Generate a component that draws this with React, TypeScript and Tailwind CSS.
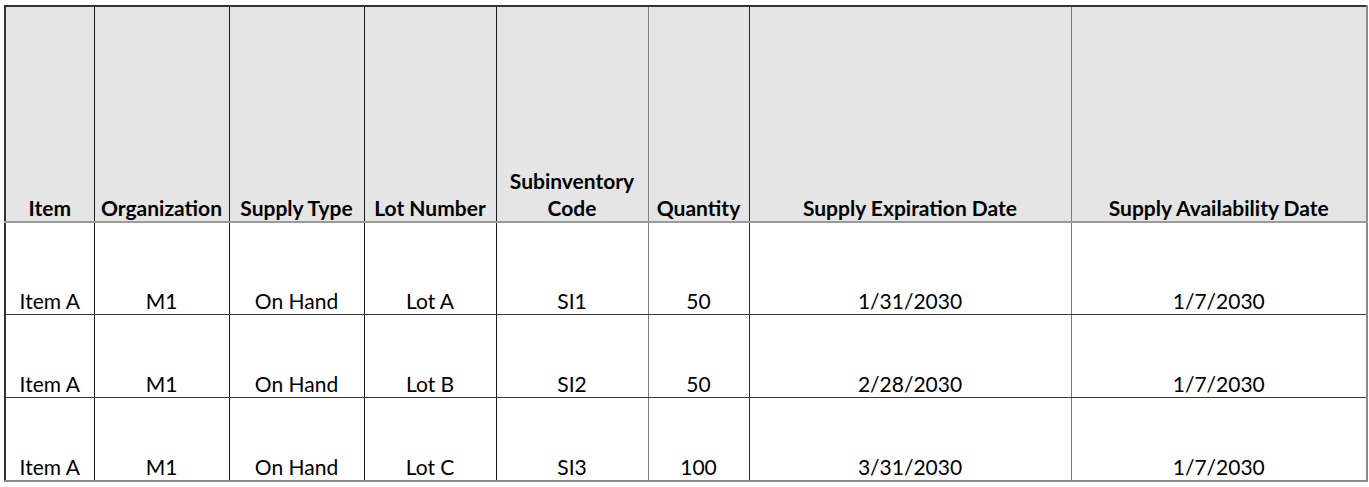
import React from "react";

const cols = [
  { label: ["Item"], w: "w-[89px]" },
  { label: ["Organization"], w: "w-[135px]" },
  { label: ["Supply Type"], w: "w-[135px]" },
  { label: ["Lot Number"], w: "w-[132px]" },
  { label: ["Subinventory", "Code"], w: "w-[152px]" },
  { label: ["Quantity"], w: "w-[101px]" },
  { label: ["Supply Expiration Date"], w: "w-[322px]" },
  { label: ["Supply Availability Date"], w: "w-[296px]" },
];

const rows = [
  { h: "h-[92px]", cells: ["Item A", "M1", "On Hand", "Lot A", "SI1", "50", "1/31/2030", "1/7/2030"] },
  { h: "h-[83px]", cells: ["Item A", "M1", "On Hand", "Lot B", "SI2", "50", "2/28/2030", "1/7/2030"] },
  { h: "h-[84px]", cells: ["Item A", "M1", "On Hand", "Lot C", "SI3", "100", "3/31/2030", "1/7/2030"] },
];

const vColor = [
  "border-r-[#1a1a1a]",
  "border-r-[#1a1a1a]",
  "border-r-[#1a1a1a]",
  "border-r-[#1a1a1a]",
  "border-r-[#808080]",
  "border-r-[#2a2a2a]",
  "border-r-[#7a7a7a]",
  "border-r-[#8a8a8a]",
];

export default function App() {
  return (
    <div className="bg-white w-[1369px] h-[487px] pt-[5px] pl-[4px] font-['Lato','Open_Sans',sans-serif] text-black">
      <table className="table-fixed border-collapse border-l-[2px] border-t-[2px] border-l-[#333333] border-t-[#333333]">
        <colgroup>
          {cols.map((c, i) => (
            <col key={i} className={c.w} />
          ))}
        </colgroup>
        <thead>
          <tr className="h-[216px] bg-[#e5e5e5]">
            {cols.map((c, i) => (
              <th
                key={i}
                className={`align-bottom text-center font-bold text-[21px] leading-[27px] p-0 border-r border-b-[2px] border-b-[#9a9a9a] ${vColor[i]} ${i === cols.length - 1 ? "border-r-[2px]" : ""}`}
              >
                {c.label.map((l, j) => (
                  <div key={j} className="whitespace-nowrap">
                    {l}
                  </div>
                ))}
              </th>
            ))}
          </tr>
        </thead>
        <tbody>
          {rows.map((r, ri) => (
            <tr key={ri} className={`${r.h} bg-white`}>
              {r.cells.map((t, i) => (
                <td
                  key={i}
                  className={`align-bottom text-center text-[21px] leading-[26px] p-0 whitespace-nowrap border-r ${vColor[i]} ${i === cols.length - 1 ? "border-r-[2px]" : ""} ${ri === rows.length - 1 ? "border-b-[2px] border-b-[#8a8a8a]" : "border-b border-b-[#3a3a3a]"}`}
                >
                  {t}
                </td>
              ))}
            </tr>
          ))}
        </tbody>
      </table>
    </div>
  );
}
